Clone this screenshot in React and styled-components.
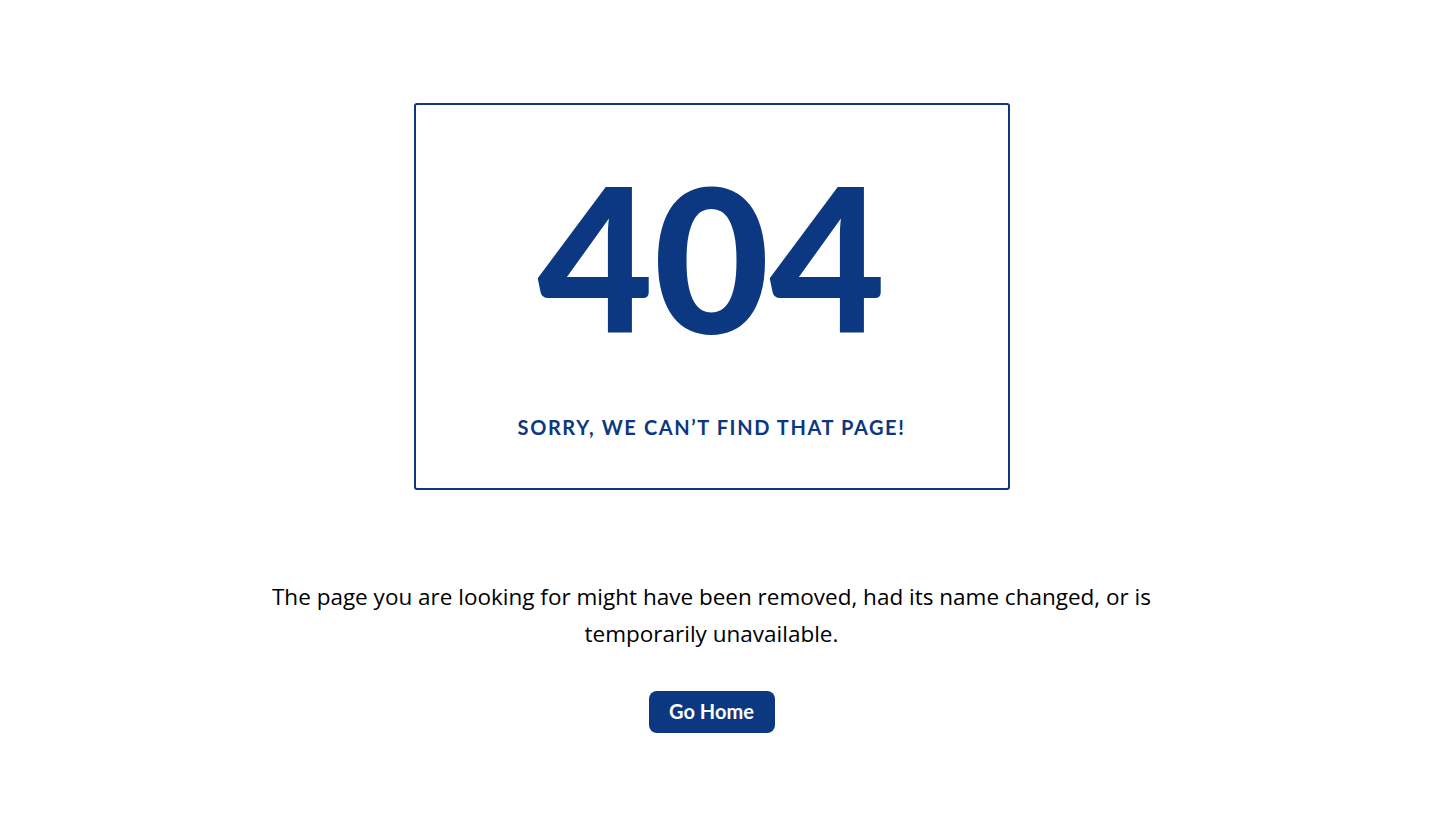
import styled, { createGlobalStyle } from "styled-components";

const GlobalStyle = createGlobalStyle`
  html, body {
    margin: 0;
    padding: 0;
    background: #ffffff;
  }
`;

const Page = styled.main`
  display: flex;
  flex-direction: column;
  align-items: center;
  padding: 103px 14px 0 0;
`;

const Card = styled.section`
  box-sizing: border-box;
  width: 596px;
  height: 387px;
  border: 2px solid #0b3880;
  border-radius: 3px;
  display: flex;
  flex-direction: column;
  align-items: center;
  padding-top: 51px;
`;

const Code = styled.h1`
  margin: 0;
  font-family: Lato, "Liberation Sans", sans-serif;
  font-weight: 900;
  font-size: 200px;
  line-height: 1;
  color: #0b3880;
`;

const Subtitle = styled.h2`
  margin: 59px 0 0;
  font-family: Lato, "Liberation Sans", sans-serif;
  font-weight: 700;
  font-size: 20px;
  line-height: 24px;
  letter-spacing: 1.6px;
  text-transform: uppercase;
  color: #0b3880;
`;

const Message = styled.p`
  margin: 88px 0 0;
  width: 920px;
  font-family: "Open Sans", sans-serif;
  font-size: 22.5px;
  line-height: 37px;
  text-align: center;
  color: #000000;
`;

const HomeButton = styled.button`
  margin-top: 39px;
  width: 126px;
  height: 42px;
  border: none;
  border-radius: 8px;
  background: #0b3880;
  color: #ffffff;
  font-family: Lato, "Liberation Sans", sans-serif;
  font-weight: 700;
  font-size: 20px;
  padding: 0 0 2px;
  cursor: pointer;
`;

export default function App() {
  return (
    <>
      <GlobalStyle />
      <Page>
        <Card>
          <Code>404</Code>
          <Subtitle>Sorry, we can’t find that page!</Subtitle>
        </Card>
        <Message>
          The page you are looking for might have been removed, had its name
          changed, or is temporarily unavailable.
        </Message>
        <HomeButton>Go Home</HomeButton>
      </Page>
    </>
  );
}
